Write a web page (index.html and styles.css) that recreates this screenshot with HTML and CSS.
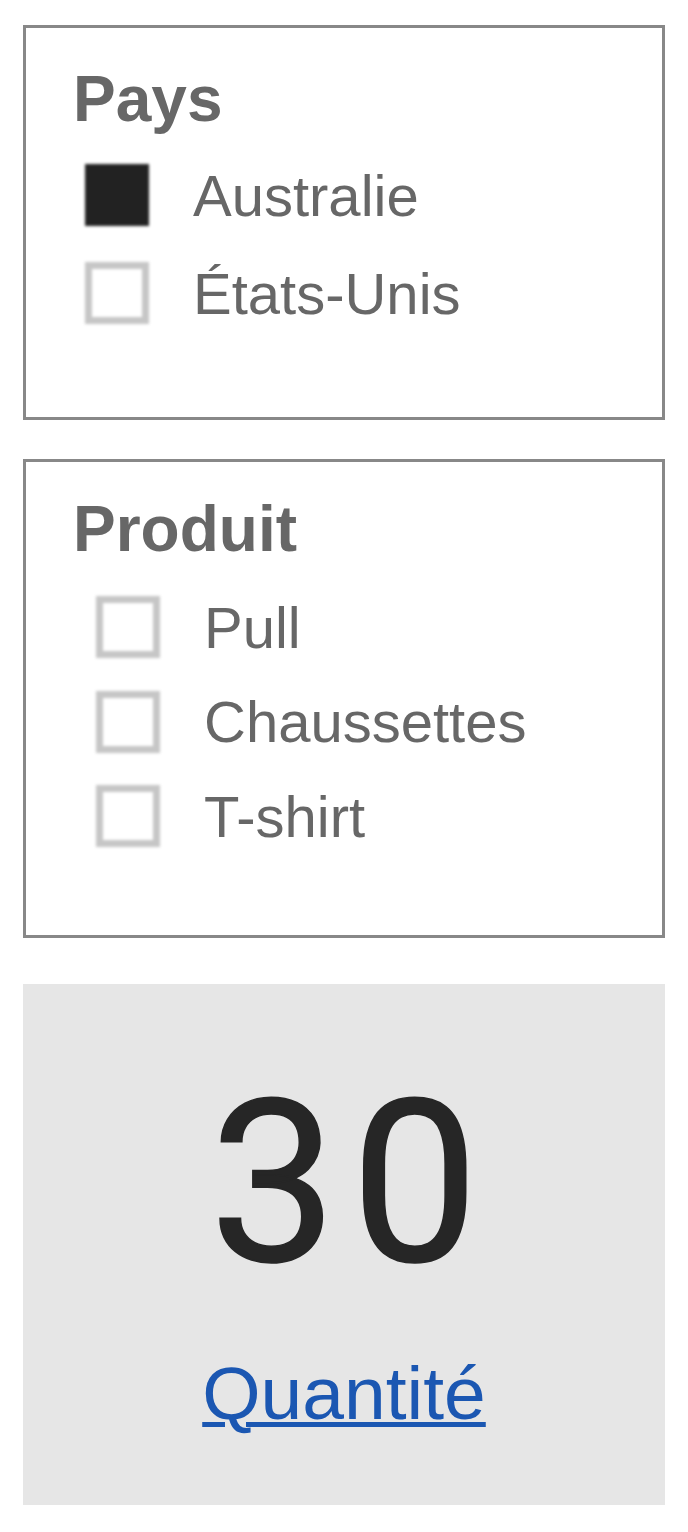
FILE: index.html
```html
<!DOCTYPE html>
<html lang="fr">
<head>
<meta charset="utf-8">
<title>Filtres</title>
<link rel="stylesheet" href="styles.css">
</head>
<body>
<main class="page">
  <section class="filter filter-country">
    <h2 class="filter-title">Pays</h2>
    <ul class="options">
      <li class="option"><span class="box checked"></span><span class="label">Australie</span></li>
      <li class="option"><span class="box"></span><span class="label">États-Unis</span></li>
    </ul>
  </section>
  <section class="filter filter-product">
    <h2 class="filter-title">Produit</h2>
    <ul class="options">
      <li class="option"><span class="box"></span><span class="label">Pull</span></li>
      <li class="option"><span class="box"></span><span class="label">Chaussettes</span></li>
      <li class="option"><span class="box"></span><span class="label">T-shirt</span></li>
    </ul>
  </section>
  <section class="kpi">
    <div class="kpi-value">30</div>
    <a class="kpi-label" href="#">Quantité</a>
  </section>
</main>
</body>
</html>
```

FILE: styles.css
```css
* { box-sizing: border-box; }
html, body { margin: 0; padding: 0; background: #ffffff; }
body { font-family: "Liberation Sans", Arial, sans-serif; }

.page {
  display: flex;
  flex-direction: column;
  padding: 25px 23px 0 23px;
}

.filter {
  border: 3px solid #888888;
  background: #ffffff;
}

.filter-title {
  margin: 0;
  padding-left: 47px;
  font-size: 64px;
  line-height: 70px;
  font-weight: 700;
  color: #676767;
}

.options {
  list-style: none;
  margin: 0;
  padding: 0;
}

.option {
  display: flex;
  align-items: center;
  gap: 44px;
}

.label {
  font-size: 58px;
  color: #676767;
  white-space: nowrap;
}

.box {
  flex: none;
  width: 64px;
  height: 62px;
  border: 7px solid #c6c6c6;
  background: #ffffff;
  filter: blur(1.5px);
}
.box.checked {
  background: #222222;
  border-color: #222222;
}

/* Pays */
.filter-country { height: 395px; padding-top: 36px; }
.filter-country .options { margin-top: 12px; padding-left: 59px; }
.filter-country .option { height: 98px; }

/* Produit */
.filter-product { height: 479px; margin-top: 39px; padding-top: 32px; }
.filter-product .options { margin-top: 16px; padding-left: 70px; }
.filter-product .option { height: 94.5px; }

/* KPI card */
.kpi {
  margin-top: 46px;
  height: 521px;
  background: #e6e6e6;
  display: flex;
  flex-direction: column;
  align-items: center;
  padding-top: 86px;
}

.kpi-value {
  font-family: Roboto, "Liberation Sans", sans-serif;
  font-size: 227px;
  line-height: 227px;
  font-weight: 400;
  letter-spacing: 14px;
  padding-left: 14px;
  color: #262626;
  -webkit-text-stroke: 1.5px #262626;
}

.kpi-label {
  margin-top: 53px;
  font-size: 75px;
  line-height: 86px;
  color: #1b57b2;
  text-decoration: underline;
  text-decoration-thickness: 5px;
}
```
